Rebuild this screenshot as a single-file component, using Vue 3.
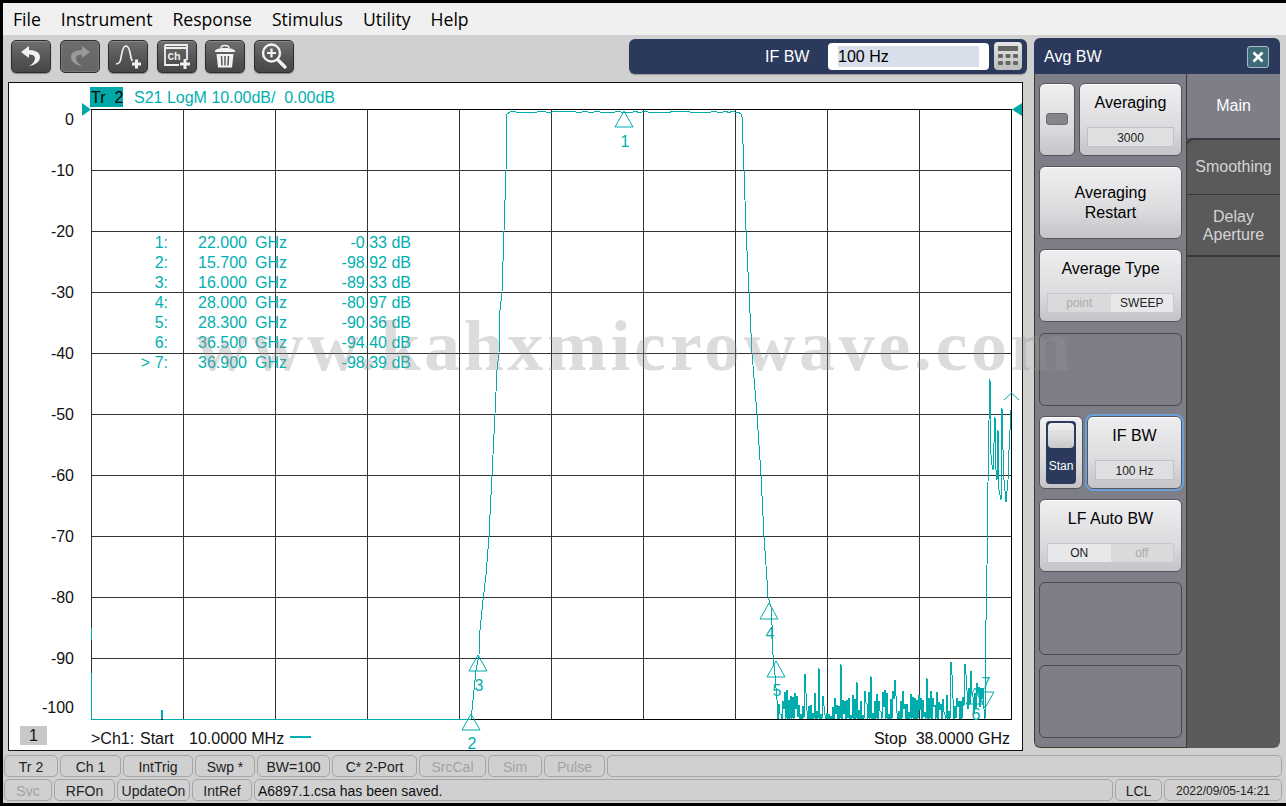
<template>
  <div class="analyzer">
    <div class="app-frame">
      <!-- menu -->
      <div class="menu-bar">
        <span v-for="m in menus" :key="m">{{ m }}</span>
      </div>

      <div class="workspace">
        <div class="left-col">
          <div class="toolbar">
            <button class="tool-btn">
              <svg width="26" height="24" viewBox="0 0 26 24">
                <path d="M3 8 L11 2 L11 6 C18 6 22 9 22 13 C22 18 17 21 11 22 C15 20 17 17 17 14 C17 11.500 14 10.500 11 10.500 L11 14 Z" fill="#f2f2f2" />
              </svg>
            </button>
            <button class="tool-btn is-off">
              <svg width="26" height="24" viewBox="0 0 26 24">
                <path d="M23 8 L15 2 L15 6 C8 6 4 9 4 13 C4 18 9 21 15 22 C11 20 9 17 9 14 C9 11.500 12 10.500 15 10.500 L15 14 Z" fill="#9a9a9a" />
              </svg>
            </button>
            <button class="tool-btn">
              <svg width="30" height="26" viewBox="0 0 30 26">
                <path d="M3 21 C7 21 7.500 18 8.500 12 C9.500 6 10.500 3 13 3 C15.500 3 16.500 6 17.500 12 C18 15 18.500 17 19.500 18" fill="none" stroke="#f2f2f2" stroke-width="1.600" />
                <path d="M19 21 H28 M23.500 16.500 V25.500" stroke="#f2f2f2" stroke-width="3" />
              </svg>
            </button>
            <button class="tool-btn">
              <svg width="30" height="26" viewBox="0 0 30 26">
                <path d="M3 2 H25 V17 M3 2 V22 H17" fill="none" stroke="#f0f0f0" stroke-width="1.800" />
                <path d="M3 5 H25" stroke="#f0f0f0" stroke-width="2" />
                <text x="5.500" y="17" class="ch-glyph">Ch</text>
                <path d="M18 21 H28 M23 16 V26" stroke="#f2f2f2" stroke-width="3" />
              </svg>
            </button>
            <button class="tool-btn">
              <svg width="26" height="26" viewBox="0 0 26 26">
                <path d="M3 7.500 C5 5.500 9 5 13 5 C17 5 21 5.500 23 7.500 V9 H3 Z" fill="#f2f2f2" />
                <path d="M9 5 C9 1.500 17 1.500 17 5" fill="none" stroke="#f2f2f2" stroke-width="1.500" />
                <path d="M4.500 11 H21.500 L20 24.500 H6 Z" fill="#f2f2f2" />
                <path d="M9.500 13 L10 22.500 M13 13 V22.500 M16.500 13 L16 22.500" stroke="#5a5a5a" stroke-width="1.500" />
              </svg>
            </button>
            <button class="tool-btn">
              <svg width="28" height="28" viewBox="0 0 28 28">
                <circle cx="11.500" cy="11" r="8.500" fill="none" stroke="#f2f2f2" stroke-width="2.400" />
                <path d="M7 11 H16 M11.500 6.500 V15.500" stroke="#f2f2f2" stroke-width="2.200" />
                <path d="M17.500 17.500 L25 25" stroke="#f2f2f2" stroke-width="3.400" stroke-linecap="round" />
              </svg>
            </button>

            <div class="entry-bar">
              <span class="entry-label">IF BW</span>
              <div class="entry-input"><span class="entry-sel">100 Hz</span></div>
              <div class="calc-btn">
                <svg width="24" height="22" viewBox="0 0 24 22">
                  <rect x="2" y="1" width="20" height="5" fill="#666" />
                  <g fill="#666">
                    <rect x="2" y="9" width="5" height="4" rx="1" /><rect x="9.500" y="9" width="5" height="4" rx="1" /><rect x="17" y="9" width="5" height="4" rx="1" />
                    <rect x="2" y="16" width="5" height="4" rx="1" /><rect x="9.500" y="16" width="5" height="4" rx="1" /><rect x="17" y="16" width="5" height="4" rx="1" />
                  </g>
                </svg>
              </div>
            </div>
          </div>

          <!-- trace window, coordinates in the svg are page pixels -->
          <div class="chart">
            <svg class="plot" width="1015" height="669" viewBox="8 82 1015 669">
              <g class="grid">
                <line v-for="x in gridX" :key="'x' + x" :x1="x" :x2="x" y1="109" y2="719" />
                <line v-for="y in gridY" :key="'y' + y" x1="92" x2="1011" :y1="y" :y2="y" />
              </g>
              <path d="M91 109.500 H1011 M91 719.500 H1011 M1011.500 109 V720" class="grid-strong" />

              <rect x="90" y="87" width="33" height="20" fill="#00a8a8" />
              <text x="91" y="103" class="t-black">Tr&#160;&#160;2</text>
              <text x="134" y="103" class="t-teal">S21 LogM 10.00dB/&#160;&#160;0.00dB</text>

              <path d="M82 103 L91 109.500 L82 116 Z" fill="#00a8a8" />
              <path d="M1022 103 L1012 109.500 L1022 116 Z" fill="#00a8a8" />

              <text v-for="l in yLabels" :key="l.text" x="74" :y="l.y" text-anchor="end" class="t-axis">{{ l.text }}</text>

              <g class="t-teal">
                <g v-for="(r, i) in markerRows" :key="r.id">
                  <text x="168" :y="248 + i * 20" text-anchor="end">{{ r.id }}</text>
                  <text x="198" :y="248 + i * 20">{{ r.freq }}</text>
                  <text x="255" :y="248 + i * 20">GHz</text>
                  <text x="411" :y="248 + i * 20" text-anchor="end">{{ r.amp }}</text>
                </g>
              </g>

              <polyline :points="tracePoints" class="trace" />
              <path d="M91.500 673 V719 M91.500 628 V640" class="trace" />
              <path d="M1004 400 L1011.500 393 L1019 400" class="marker" />

              <g v-for="m in markers" :key="m.n">
                <path class="marker" :d="m.down
                  ? `M${m.x - 9} ${m.y} H${m.x + 9} L${m.x} ${m.y + 16} Z`
                  : `M${m.x} ${m.y} L${m.x + 9} ${m.y + 16} H${m.x - 9} Z`" />
                <text :x="m.x + 1" :y="m.ny" text-anchor="middle" class="t-teal">{{ m.n }}</text>
              </g>

              <text y="744" class="t-axis"><tspan x="91">&gt;Ch1:</tspan><tspan x="140">Start</tspan><tspan x="189">10.0000 MHz</tspan></text>
              <path d="M290 737 H311" stroke="#00b0b0" stroke-width="2" />
              <text x="1010" y="744" text-anchor="end" class="t-axis">Stop&#160;&#160;38.0000 GHz</text>
            </svg>
            <div class="ch-badge">1</div>
          </div>
        </div>

        <!-- softkey panel -->
        <div class="panel">
          <div class="panel-head">
            <span class="head-title">Avg BW</span>
            <div class="close-btn">
              <svg width="14" height="14" viewBox="0 0 14 14"><path d="M2.500 2.500 L11.500 11.500 M11.500 2.500 L2.500 11.500" stroke="#fff" stroke-width="2.600" /></svg>
            </div>
          </div>
          <div class="panel-body">
            <div class="keys">
              <div class="key-row">
                <div class="key key-side">
                  <span class="pill"></span>
                </div>
                <div class="key key-grow">
                  <div class="key-title">Averaging</div>
                  <div class="key-value">3000</div>
                </div>
              </div>
              <div class="key-row">
                <div class="key key-grow key-center">Averaging<br>Restart</div>
              </div>
              <div class="key-row">
                <div class="key key-grow">
                  <div class="key-title">Average Type</div>
                  <div class="key-seg">
                    <span class="seg-dim">point</span>
                    <span class="seg-on">SWEEP</span>
                  </div>
                </div>
              </div>
              <div class="key-row"><div class="key-empty"></div></div>
              <div class="key-row">
                <div class="key key-stan">
                  <div class="stan-slot">
                    <div class="stan-knob"></div>
                    <span>Stan</span>
                  </div>
                </div>
                <div class="key key-grow key-focus">
                  <div class="key-title">IF BW</div>
                  <div class="key-value">100 Hz</div>
                </div>
              </div>
              <div class="key-row">
                <div class="key key-grow">
                  <div class="key-title">LF Auto BW</div>
                  <div class="key-seg">
                    <span class="seg-on">ON</span>
                    <span class="seg-dim">off</span>
                  </div>
                </div>
              </div>
              <div class="key-row"><div class="key-empty"></div></div>
              <div class="key-row"><div class="key-empty"></div></div>
            </div>
            <div class="tabs">
              <div class="tab tab-active">Main</div>
              <div class="tab tab-first">Smoothing</div>
              <div class="tab tab-delay">Delay<br>Aperture</div>
              <div class="tab-rest"></div>
            </div>
          </div>
        </div>
      </div>

      <!-- status -->
      <div class="status-row status-top">
        <div v-for="c in statusTop" :key="c.t" class="chip" :class="{ dim: c.off }" :style="{ width: c.w + 'px' }">{{ c.t }}</div>
        <div class="chip chip-fill"></div>
      </div>
      <div class="status-row">
        <div v-for="c in statusBottom" :key="c.t" class="chip" :class="{ dim: c.off }" :style="{ width: c.w + 'px' }">{{ c.t }}</div>
        <div class="chip chip-fill chip-msg">A6897.1.csa has been saved.</div>
        <div class="chip chip-lcl">LCL</div>
        <div class="chip chip-date">2022/09/05-14:21</div>
      </div>
    </div>

    <div class="watermark">www.kahxmicrowave.com</div>
  </div>
</template>

<script setup>
const menus = ['File', 'Instrument', 'Response', 'Stimulus', 'Utility', 'Help']

const gridX = [91, 183, 275, 367, 459, 551, 643, 735, 827, 919].map(x => x + 0.5)
const gridY = [170, 231, 292, 353, 414, 475, 536, 597, 658].map(y => y + 0.5)

const yLabels = [
  { text: '0', y: 125 }, { text: '-10', y: 176 }, { text: '-20', y: 237 },
  { text: '-30', y: 298 }, { text: '-40', y: 359 }, { text: '-50', y: 420 },
  { text: '-60', y: 481 }, { text: '-70', y: 542 }, { text: '-80', y: 603 },
  { text: '-90', y: 664 }, { text: '-100', y: 713 }
]

const markerRows = [
  { id: '1:', freq: '22.000', amp: '-0.33 dB' },
  { id: '2:', freq: '15.700', amp: '-98.92 dB' },
  { id: '3:', freq: '16.000', amp: '-89.33 dB' },
  { id: '4:', freq: '28.000', amp: '-80.97 dB' },
  { id: '5:', freq: '28.300', amp: '-90.36 dB' },
  { id: '6:', freq: '36.500', amp: '-94.40 dB' },
  { id: '> 7:', freq: '36.900', amp: '-98.39 dB' }
]

const markers = [
  { n: 1, x: 624, y: 111, ny: 147 },
  { n: 2, x: 471, y: 714, ny: 749 },
  { n: 3, x: 478, y: 655, ny: 691 },
  { n: 4, x: 769, y: 603, ny: 639 },
  { n: 5, x: 776, y: 661, ny: 696 },
  { n: 6, x: 975, y: 688, ny: 720 },
  { n: 7, x: 985, y: 692, ny: 689, down: true }
]

// passband and skirts read off the picture
const risePts = [
  [91, 719], [161, 719], [162, 710], [163, 719], [471, 719], [472, 710], [474, 690], [476, 670], [479, 655],
  [480, 630], [483, 600], [486, 575], [489, 536], [492, 475], [495, 414], [497, 370],
  [499, 353], [500, 310], [502, 292], [504, 231], [506, 170], [507, 114], [510, 112]
]
const fallPts = [
  [738, 112], [741, 114], [742, 117], [744, 170], [746, 230], [749, 292], [752, 353],
  [757, 414], [761, 475], [764, 536], [767, 580], [768, 597], [771, 607], [772, 625],
  [773, 655], [775, 675], [777, 700], [778, 719]
]
const tailPts = [
  [985, 719], [986, 620], [987, 566], [988, 482], [989, 420], [990, 379], [990.500, 417],
  [991, 455], [992, 465], [993, 470], [995, 417], [996, 470], [997, 480], [998, 430], [999, 490],
  [1001, 500], [1002, 408], [1003, 450], [1004, 480], [1006, 502], [1008, 480], [1009, 450], [1011, 410]
]

// tiny lcg so the noise floor stays the same on every load
let seed = 20220905
const rand = () => {
  seed = (seed * 1103515245 + 12345) % 2147483648
  return seed / 2147483648
}

const flatPts = []
for (let x = 510; x < 738; x += 3) {
  flatPts.push([x, 111 + Math.round(rand() * 1.6)])
}

const peaks = { 787: 690, 805: 674, 819: 668, 841: 664, 857: 682, 871: 676, 896: 680, 927: 678, 951: 662, 965: 664, 972: 671 }
const noisePts = []
for (let x = 779; x < 985; x += 2) {
  const dense = x > 962
  const top = peaks[x] || peaks[x + 1] || (dense ? 682 + rand() * 16 : 690 + rand() * 26)
  noisePts.push([x, Math.round(top)])
  const low = rand() < 0.6 && !dense ? 719 : Math.min(719, Math.round(top + 8 + rand() * 14))
  noisePts.push([x + 1, low])
}

const tracePoints = [...risePts, ...flatPts, ...fallPts, ...noisePts, ...tailPts]
  .map(p => p.join(','))
  .join(' ')

const statusTop = [
  { t: 'Tr 2', w: 54 }, { t: 'Ch 1', w: 61 }, { t: 'IntTrig', w: 70 }, { t: 'Swp *', w: 60 },
  { t: 'BW=100', w: 73 }, { t: 'C* 2-Port', w: 85 }, { t: 'SrcCal', w: 67, off: true },
  { t: 'Sim', w: 54, off: true }, { t: 'Pulse', w: 61, off: true }
]
const statusBottom = [
  { t: 'Svc', w: 48, off: true }, { t: 'RFOn', w: 61 }, { t: 'UpdateOn', w: 73 }, { t: 'IntRef', w: 60 }
]
</script>

<style>
html, body { margin: 0; background: #000; }
</style>

<style scoped>
.analyzer {
  position: relative;
  width: 1286px;
  height: 806px;
  background: #000;
  padding: 3px 0 3px 3px;
  box-sizing: border-box;
  overflow: hidden;
  font-family: "Liberation Sans", Arial, sans-serif;
}

.app-frame {
  height: 800px;
  background: #d0d0d0;
  display: flex;
  flex-direction: column;
}

.menu-bar {
  height: 32px;
  background: #f0f0f0;
  display: flex;
  align-items: center;
  gap: 20px;
  padding-left: 10px;
  font-family: "Open Sans", sans-serif;
  font-size: 17.600px;
  color: #000;
}

.workspace {
  display: flex;
  height: 720px;
}

.left-col {
  width: 1031px;
}

.toolbar {
  height: 47px;
  display: flex;
  align-items: flex-start;
  gap: 8.600px;
  padding: 5px 7px 0 8px;
  box-sizing: border-box;
}

.tool-btn {
  width: 40px;
  height: 33px;
  padding: 0;
  display: flex;
  align-items: center;
  justify-content: center;
  border: 1px solid #2d2d2d;
  border-radius: 5px;
  background: linear-gradient(#6f6f6f, #555 55%, #474747);
  box-shadow: inset 0 1px 0 #8a8a8a, 0 1px 1px #888;
}

.tool-btn.is-off {
  background: linear-gradient(#6c6c6c, #666);
  box-shadow: inset 0 0 0 1px #787878;
}

.ch-glyph {
  font-family: "Liberation Mono", monospace;
  font-size: 11px;
  font-weight: 700;
  fill: #f0f0f0;
}

.entry-bar {
  margin-left: auto;
  margin-top: -1px;
  width: 398px;
  height: 35px;
  background: #2b3a5c;
  border-radius: 6px;
  display: flex;
  align-items: center;
  box-sizing: border-box;
  padding-left: 136px;
  box-shadow: 0 1px 1px #999;
}

.entry-label {
  color: #fff;
  font-size: 16px;
  width: 63px;
  padding-top: 2px;
}

.entry-input {
  width: 161px;
  height: 27px;
  background: #fff;
  border-radius: 4px;
  box-sizing: border-box;
  padding: 3px 10px;
}

.entry-sel {
  display: block;
  height: 21px;
  line-height: 21px;
  background: #d8deea;
  font-size: 16px;
  color: #000;
}

.calc-btn {
  width: 28px;
  height: 28px;
  margin-left: 5px;
  border-radius: 4px;
  background: linear-gradient(#e4e4e4, #bdbdbd);
  display: flex;
  align-items: center;
  justify-content: center;
}

.chart {
  position: relative;
  width: 1015px;
  height: 669px;
  margin-left: 5px;
  background: #fff;
  box-shadow: inset 1px 1px 0 #111, inset -1px -1px 0 #111;
}

.plot {
  position: absolute;
  left: 0;
  top: 0;
  font-family: "Liberation Sans", Arial, sans-serif;
  font-size: 16px;
}

.grid line {
  stroke: #333;
  stroke-width: 1;
  shape-rendering: crispEdges;
}

.grid-strong {
  fill: none;
  stroke: #000;
  stroke-width: 1;
  shape-rendering: crispEdges;
}

.t-teal {
  fill: #00b0b0;
}

.t-black {
  fill: #000;
}

.t-axis {
  fill: #111;
}

.trace {
  fill: none;
  stroke: #00acac;
  stroke-width: 1;
  shape-rendering: crispEdges;
}

.marker {
  fill: none;
  stroke: #00acac;
  stroke-width: 1;
}

.ch-badge {
  position: absolute;
  left: 12px;
  top: 644px;
  width: 27px;
  height: 19px;
  background: #c8c8c8;
  text-align: center;
  font-size: 16px;
  line-height: 19px;
  color: #111;
}

.panel {
  width: 246px;
  height: 710px;
  margin-top: 3px;
  display: flex;
  flex-direction: column;
  border-radius: 6px;
  overflow: hidden;
}

.panel-head {
  height: 36px;
  flex: none;
  background: #2b3a5c;
  display: flex;
  align-items: center;
  justify-content: space-between;
  padding: 0 11px 0 10px;
  color: #fff;
  font-size: 16px;
}

.head-title {
  padding-top: 3px;
}

.close-btn {
  width: 22px;
  height: 22px;
  margin-top: 2px;
  box-sizing: border-box;
  background: #3f6a78;
  border: 1px solid #aeb9c6;
  border-radius: 3px;
  display: flex;
  align-items: center;
  justify-content: center;
}

.panel-body {
  flex: 1;
  display: flex;
  min-height: 0;
}

.keys {
  width: 153px;
  box-sizing: border-box;
  background: #7e7e88;
  border: solid #3c3c28;
  border-width: 0 1px 1px 1px;
  border-bottom-left-radius: 6px;
  padding: 9px 4px 8px 4px;
  display: flex;
  flex-direction: column;
  gap: 10.200px;
}

.key-row {
  height: 73px;
  flex: none;
  display: flex;
  gap: 4px;
}

.key {
  box-sizing: border-box;
  height: 100%;
  border-radius: 6px;
  background: linear-gradient(#efeff1, #dcdcdf 60%, #c4c4c8);
  border: 1px solid #55555c;
  box-shadow: inset 0 1px 0 #fff;
  color: #000;
  font-size: 16px;
  text-align: center;
}

.key-grow {
  flex: 1;
  min-width: 0;
  padding: 0 7px;
}

.key-side {
  width: 36px;
  flex: none;
  display: flex;
  align-items: center;
  justify-content: center;
}

.pill {
  width: 20px;
  height: 10px;
  border-radius: 3px;
  background: #85858b;
  border: 1px solid #6b6b70;
}

.key-center {
  display: flex;
  align-items: center;
  justify-content: center;
  line-height: 20px;
}

.key-title {
  margin-top: 9px;
  height: 34px;
  line-height: 20px;
}

.key-value {
  height: 20px;
  line-height: 20px;
  font-size: 12px;
  color: #222;
  background: #dfdfe1;
  border: 1px solid #c2c2c6;
  box-sizing: border-box;
}

.key-seg {
  height: 20px;
  display: flex;
  background: #e4e4e6;
  border: 1px solid #c8c8cc;
  box-sizing: border-box;
  font-size: 12px;
  line-height: 18px;
}

.key-seg span {
  flex: 1;
}

.seg-dim {
  color: #aaa;
  background: #dadadc;
}

.seg-on {
  color: #222;
  background: #e8e8ea;
}

.key-empty {
  flex: 1;
  border-radius: 6px;
  border: 1px solid #47474c;
  background: #7e7e88;
}

.key-stan {
  width: 44px;
  flex: none;
  padding: 4px 6px;
}

.stan-slot {
  height: 100%;
  background: #2b3a5c;
  border-radius: 4px;
  color: #fff;
  font-size: 12px;
  box-sizing: border-box;
  padding-top: 2px;
}

.stan-knob {
  height: 25px;
  margin: 0 2px 11px;
  border-radius: 4px;
  background: linear-gradient(transparent 8px, #dcdcdc 8px, #dcdcdc 9px, transparent 9px, transparent 15px, #dcdcdc 15px, #dcdcdc 16px, transparent 16px),
    linear-gradient(#f2f2f2, #c8c8c8);
}

.key-focus {
  outline: 2px solid #6a9fd8;
  outline-offset: 0;
}

.tabs {
  flex: 1;
  display: flex;
  flex-direction: column;
  background: #5a5a5a;
  border-bottom-right-radius: 6px;
}

.tab {
  flex: none;
  height: 62px;
  color: #d4d4d4;
  font-size: 16px;
  line-height: 18px;
  display: flex;
  align-items: center;
  justify-content: center;
  text-align: center;
  background: #5a5a5a;
  border-bottom: 1px solid #3a3a3a;
  box-sizing: border-box;
}

.tab-first {
  height: 57px;
  border-top: 2px solid #3a3a3a;
  border-top-left-radius: 8px;
  background-clip: padding-box;
  box-shadow: -1px 0 0 #3a3a3a;
}

.tab-delay {
  padding-top: 3px;
  border-bottom-width: 2px;
}

.tab-active {
  height: 64px;
  color: #fff;
  background: #7e7e88;
  border-bottom: 0;
  padding-top: 1px;
}

.tab-rest {
  flex: 1;
}

.status-row {
  height: 22px;
  flex: none;
  display: flex;
  gap: 2px;
  margin: 0 4px 2px 1px;
}

.status-top {
  margin-top: 1px;
}

.chip {
  box-sizing: border-box;
  flex: none;
  border: 1px solid #a6a6a6;
  border-radius: 5px;
  font-size: 14px;
  line-height: 22px;
  text-align: center;
  color: #222;
  background: #d0d0d0;
}

.chip.dim {
  color: #a2a2a2;
}

.chip-fill {
  flex: 1;
}

.chip-msg {
  text-align: left;
  padding-left: 3px;
  color: #111;
}

.chip-lcl {
  width: 47px;
}

.chip-date {
  width: 118px;
  font-size: 12px;
}

.watermark {
  position: absolute;
  left: 196px;
  top: 306px;
  font-family: "Liberation Serif", serif;
  font-weight: 700;
  font-size: 72px;
  letter-spacing: 3.600px;
  line-height: 80px;
  white-space: nowrap;
  color: rgba(150, 150, 150, 0.33);
  pointer-events: none;
}
</style>
